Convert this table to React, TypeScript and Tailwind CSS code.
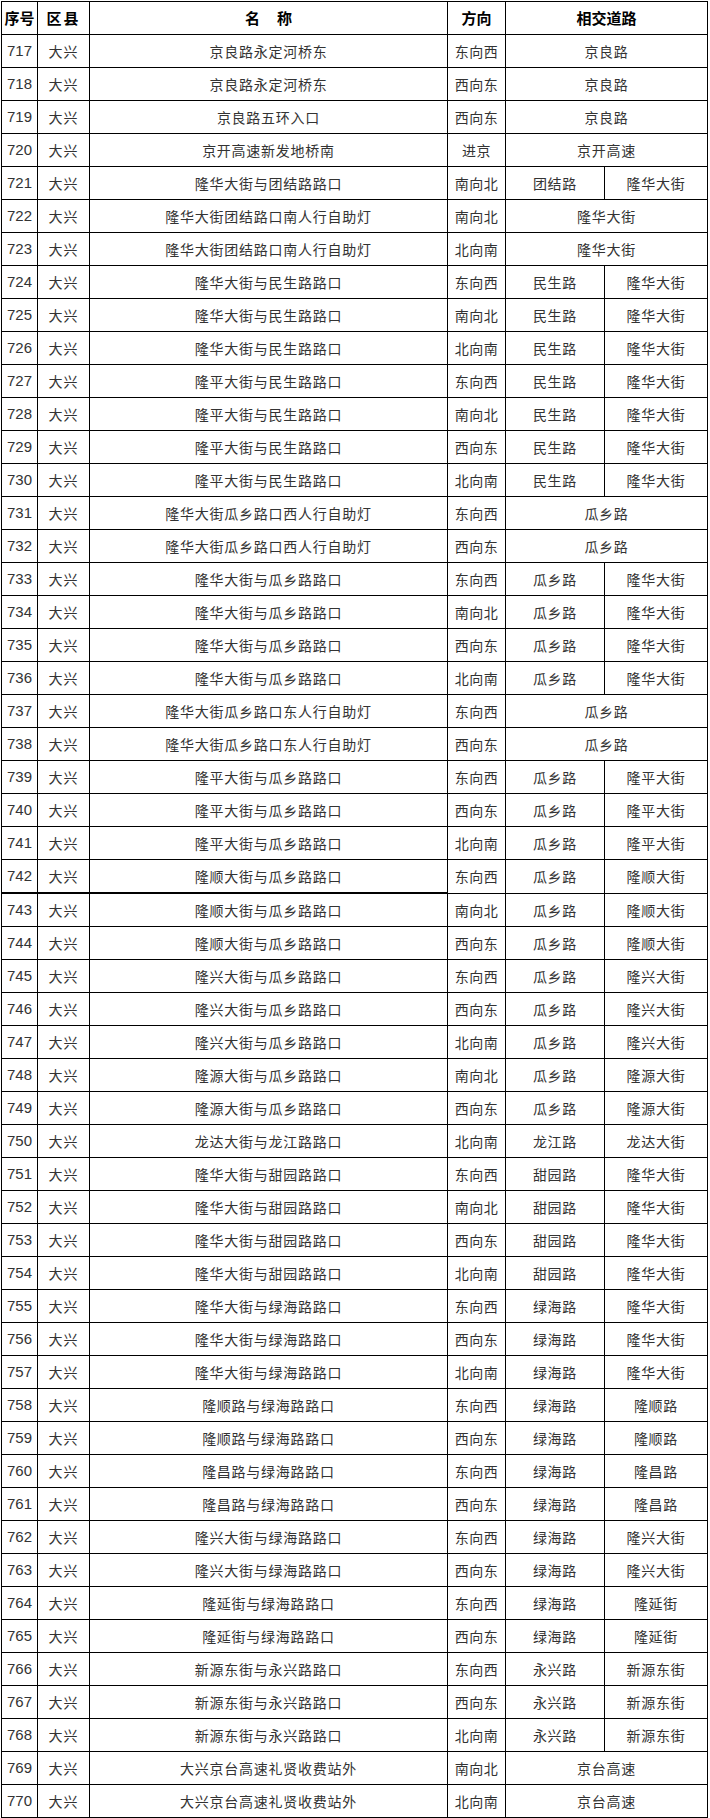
import React from "react";

type Row = [number, string, string, string, string?];

// [序号, 名称, 方向, 相交道路1, 相交道路2?] – a missing second road means the cell spans both columns
const rows: Row[] = [
  [717, "京良路永定河桥东", "东向西", "京良路"],
  [718, "京良路永定河桥东", "西向东", "京良路"],
  [719, "京良路五环入口", "西向东", "京良路"],
  [720, "京开高速新发地桥南", "进京", "京开高速"],
  [721, "隆华大街与团结路路口", "南向北", "团结路", "隆华大街"],
  [722, "隆华大街团结路口南人行自助灯", "南向北", "隆华大街"],
  [723, "隆华大街团结路口南人行自助灯", "北向南", "隆华大街"],
  [724, "隆华大街与民生路路口", "东向西", "民生路", "隆华大街"],
  [725, "隆华大街与民生路路口", "南向北", "民生路", "隆华大街"],
  [726, "隆华大街与民生路路口", "北向南", "民生路", "隆华大街"],
  [727, "隆平大街与民生路路口", "东向西", "民生路", "隆华大街"],
  [728, "隆平大街与民生路路口", "南向北", "民生路", "隆华大街"],
  [729, "隆平大街与民生路路口", "西向东", "民生路", "隆华大街"],
  [730, "隆平大街与民生路路口", "北向南", "民生路", "隆华大街"],
  [731, "隆华大街瓜乡路口西人行自助灯", "东向西", "瓜乡路"],
  [732, "隆华大街瓜乡路口西人行自助灯", "西向东", "瓜乡路"],
  [733, "隆华大街与瓜乡路路口", "东向西", "瓜乡路", "隆华大街"],
  [734, "隆华大街与瓜乡路路口", "南向北", "瓜乡路", "隆华大街"],
  [735, "隆华大街与瓜乡路路口", "西向东", "瓜乡路", "隆华大街"],
  [736, "隆华大街与瓜乡路路口", "北向南", "瓜乡路", "隆华大街"],
  [737, "隆华大街瓜乡路口东人行自助灯", "东向西", "瓜乡路"],
  [738, "隆华大街瓜乡路口东人行自助灯", "西向东", "瓜乡路"],
  [739, "隆平大街与瓜乡路路口", "东向西", "瓜乡路", "隆平大街"],
  [740, "隆平大街与瓜乡路路口", "西向东", "瓜乡路", "隆平大街"],
  [741, "隆平大街与瓜乡路路口", "北向南", "瓜乡路", "隆平大街"],
  [742, "隆顺大街与瓜乡路路口", "东向西", "瓜乡路", "隆顺大街"],
  [743, "隆顺大街与瓜乡路路口", "南向北", "瓜乡路", "隆顺大街"],
  [744, "隆顺大街与瓜乡路路口", "西向东", "瓜乡路", "隆顺大街"],
  [745, "隆兴大街与瓜乡路路口", "东向西", "瓜乡路", "隆兴大街"],
  [746, "隆兴大街与瓜乡路路口", "西向东", "瓜乡路", "隆兴大街"],
  [747, "隆兴大街与瓜乡路路口", "北向南", "瓜乡路", "隆兴大街"],
  [748, "隆源大街与瓜乡路路口", "南向北", "瓜乡路", "隆源大街"],
  [749, "隆源大街与瓜乡路路口", "西向东", "瓜乡路", "隆源大街"],
  [750, "龙达大街与龙江路路口", "北向南", "龙江路", "龙达大街"],
  [751, "隆华大街与甜园路路口", "东向西", "甜园路", "隆华大街"],
  [752, "隆华大街与甜园路路口", "南向北", "甜园路", "隆华大街"],
  [753, "隆华大街与甜园路路口", "西向东", "甜园路", "隆华大街"],
  [754, "隆华大街与甜园路路口", "北向南", "甜园路", "隆华大街"],
  [755, "隆华大街与绿海路路口", "东向西", "绿海路", "隆华大街"],
  [756, "隆华大街与绿海路路口", "西向东", "绿海路", "隆华大街"],
  [757, "隆华大街与绿海路路口", "北向南", "绿海路", "隆华大街"],
  [758, "隆顺路与绿海路路口", "东向西", "绿海路", "隆顺路"],
  [759, "隆顺路与绿海路路口", "西向东", "绿海路", "隆顺路"],
  [760, "隆昌路与绿海路路口", "东向西", "绿海路", "隆昌路"],
  [761, "隆昌路与绿海路路口", "西向东", "绿海路", "隆昌路"],
  [762, "隆兴大街与绿海路路口", "东向西", "绿海路", "隆兴大街"],
  [763, "隆兴大街与绿海路路口", "西向东", "绿海路", "隆兴大街"],
  [764, "隆延街与绿海路路口", "东向西", "绿海路", "隆延街"],
  [765, "隆延街与绿海路路口", "西向东", "绿海路", "隆延街"],
  [766, "新源东街与永兴路路口", "东向西", "永兴路", "新源东街"],
  [767, "新源东街与永兴路路口", "西向东", "永兴路", "新源东街"],
  [768, "新源东街与永兴路路口", "北向南", "永兴路", "新源东街"],
  [769, "大兴京台高速礼贤收费站外", "南向北", "京台高速"],
  [770, "大兴京台高速礼贤收费站外", "北向南", "京台高速"],
];

const cell = "flex items-center justify-center border-r border-b border-black";

export default function App() {
  return (
    <div
      className="bg-white w-[710px] h-[1818px] pt-[1px] pl-[1px] text-[14px] text-[#333]"
      style={{ fontFamily: '"Noto Sans CJK SC", "Liberation Sans", sans-serif' }}
    >
      <div className="grid grid-cols-[36px_52px_358px_58px_99px_103px] w-[707px] border-l border-t border-black">
        {/* header */}
        <div className={`${cell} h-[33px] font-bold text-black text-[15px]`}>序号</div>
        <div className={`${cell} h-[33px] font-bold text-black text-[15px] tracking-[2px]`}>区县</div>
        <div className={`${cell} h-[33px] font-bold text-black text-[15px] whitespace-pre`}>名     称</div>
        <div className={`${cell} h-[33px] font-bold text-black text-[15px]`}>方向</div>
        <div className={`${cell} h-[33px] col-span-2 font-bold text-black text-[15px]`}>相交道路</div>

        {rows.map(([no, name, dir, road1, road2]) => {
          const left = no === 742 ? "h-[34px] border-b-2" : "h-[33px]";
          const right = no === 742 ? "h-[34px]" : "h-[33px]";
          return (
            <React.Fragment key={no}>
              <div
                className={`${cell} ${left} text-[15px]`}
                style={{ fontFamily: '"Liberation Sans", sans-serif' }}
              >
                {no}
              </div>
              <div className={`${cell} ${left} tracking-[1px]`}>大兴</div>
              <div className={`${cell} ${left} tracking-[0.75px]`}>{name}</div>
              <div className={`${cell} ${right} tracking-[0.5px]`}>{dir}</div>
              {road2 ? (
                <>
                  <div className={`${cell} ${right} tracking-[0.75px]`}>{road1}</div>
                  <div className={`${cell} ${right} tracking-[0.75px]`}>{road2}</div>
                </>
              ) : (
                <div className={`${cell} ${right} col-span-2 tracking-[0.75px]`}>{road1}</div>
              )}
            </React.Fragment>
          );
        })}
      </div>
    </div>
  );
}
